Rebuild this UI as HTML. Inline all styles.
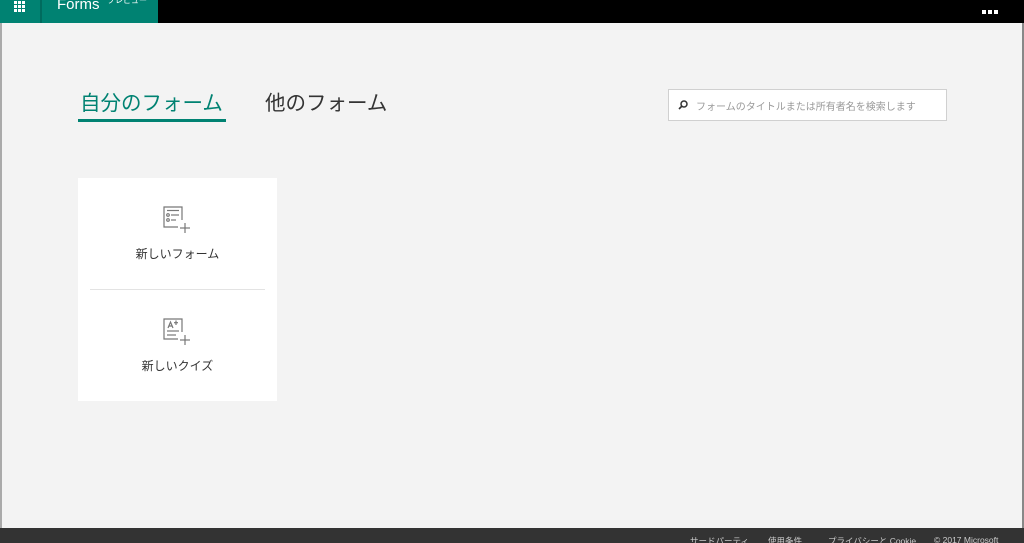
<!DOCTYPE html>
<html><head><meta charset="utf-8"><style>
*{margin:0;padding:0;box-sizing:border-box}
html,body{width:1024px;height:543px;overflow:hidden}
body{background:#f3f3f3;font-family:"Liberation Sans","Noto Sans CJK JP",sans-serif;position:relative}
.top{position:absolute;left:0;top:0;width:1024px;height:23px;background:#000}
.green{position:absolute;left:0;top:0;width:158px;height:23px;background:#008272}
.div{position:absolute;left:40px;top:0;width:2px;height:23px;background:#006b5e}
.waf{position:absolute;left:14px;top:1px;width:12px;height:10px}
.waf i{position:absolute;width:3px;height:3px;background:#fff}
.forms{position:absolute;left:57px;top:-4px;color:#fff;font-size:15px}
.pre{position:absolute;left:107px;top:-5px;color:#fff;font-size:8px}
.dots{position:absolute;right:24px;top:1px}
.dots i{display:inline-block;width:4px;height:4px;background:#fff;margin-right:2px}
.lb{position:absolute;left:0;top:23px;width:2px;height:505px;background:#aaa}
.rb{position:absolute;right:0;top:23px;width:2px;height:505px;background:#888}
.tab1{position:absolute;left:80px;top:86px;font-size:20.5px;color:#008272}
.ul{position:absolute;left:78px;top:119px;width:148px;height:3px;background:#008272}
.tab2{position:absolute;left:265px;top:86px;font-size:20.5px;color:#333}
.search{position:absolute;left:668px;top:89px;width:279px;height:32px;background:#fff;border:1px solid #d0d0d0;font-size:10px;color:#999;padding:8px 0 0 27px;white-space:nowrap;overflow:hidden}
.search svg{position:absolute;left:9px;top:10px}
.card{position:absolute;left:78px;top:178px;width:199px;height:223px;background:#fff}
.sep{position:absolute;left:12px;top:111px;width:175px;height:1px;background:#e3e3e3}
.lbl{position:absolute;width:199px;text-align:center;font-size:12px;color:#333}
.foot{position:absolute;left:0;top:528px;width:1024px;height:15px;background:#333;color:#ccc;font-size:8.5px;overflow:hidden}
.foot span{position:absolute;top:7px}
</style></head><body>
<div class="top">
 <div class="green">
  <div class="waf"><i style="left:0;top:0"></i><i style="left:4px;top:0"></i><i style="left:8px;top:0"></i><i style="left:0;top:4px"></i><i style="left:4px;top:4px"></i><i style="left:8px;top:4px"></i><i style="left:0;top:8px"></i><i style="left:4px;top:8px"></i><i style="left:8px;top:8px"></i></div>
  <div class="div"></div>
  <div class="forms">Forms</div><div class="pre">プレビュー</div>
 </div>
 <div class="dots"><i></i><i></i><i></i></div>
</div>
<div class="lb"></div><div class="rb"></div>
<div class="tab1">自分のフォーム</div><div class="ul"></div>
<div class="tab2">他のフォーム</div>
<div class="search"><svg width="10" height="10" viewBox="0 0 10 10"><circle cx="6" cy="4" r="3" fill="none" stroke="#333" stroke-width="1.5"/><line x1="4" y1="6" x2="1" y2="9" stroke="#333" stroke-width="1.6"/></svg>フォームのタイトルまたは所有者名を検索します</div>
<div class="card">
 <svg style="position:absolute;left:85px;top:28px" width="28" height="28" viewBox="0 0 28 28" fill="none" stroke="#777" stroke-width="1.2">
  <path d="M15 21H1V1h18v13"/><line x1="4" y1="4.5" x2="16" y2="4.5"/><circle cx="5" cy="9" r="1.3"/><line x1="8" y1="9" x2="16" y2="9"/><circle cx="5" cy="14" r="1.3"/><line x1="8" y1="14" x2="13" y2="14"/><line x1="22" y1="17" x2="22" y2="27"/><line x1="17" y1="22" x2="27" y2="22"/>
 </svg>
 <div class="lbl" style="top:67px">新しいフォーム</div>
 <div class="sep"></div>
 <svg style="position:absolute;left:85px;top:140px" width="28" height="28" viewBox="0 0 28 28" fill="none" stroke="#777" stroke-width="1.2">
  <path d="M15 21H1V1h18v13"/><path d="M5 10l2.5-6 2.5 6M6 8h3"/><line x1="13" y1="2.5" x2="13" y2="7"/><line x1="11" y1="4.7" x2="15" y2="4.7"/><line x1="4" y1="13" x2="16" y2="13"/><line x1="4" y1="17" x2="13" y2="17"/><line x1="22" y1="17" x2="22" y2="27"/><line x1="17" y1="22" x2="27" y2="22"/>
 </svg>
 <div class="lbl" style="top:179px">新しいクイズ</div>
</div>
<div class="foot"><span style="left:690px">サードパーティ</span><span style="left:768px">使用条件</span><span style="left:828px">プライバシーと Cookie</span><span style="left:934px">© 2017 Microsoft</span></div>
</body></html>
